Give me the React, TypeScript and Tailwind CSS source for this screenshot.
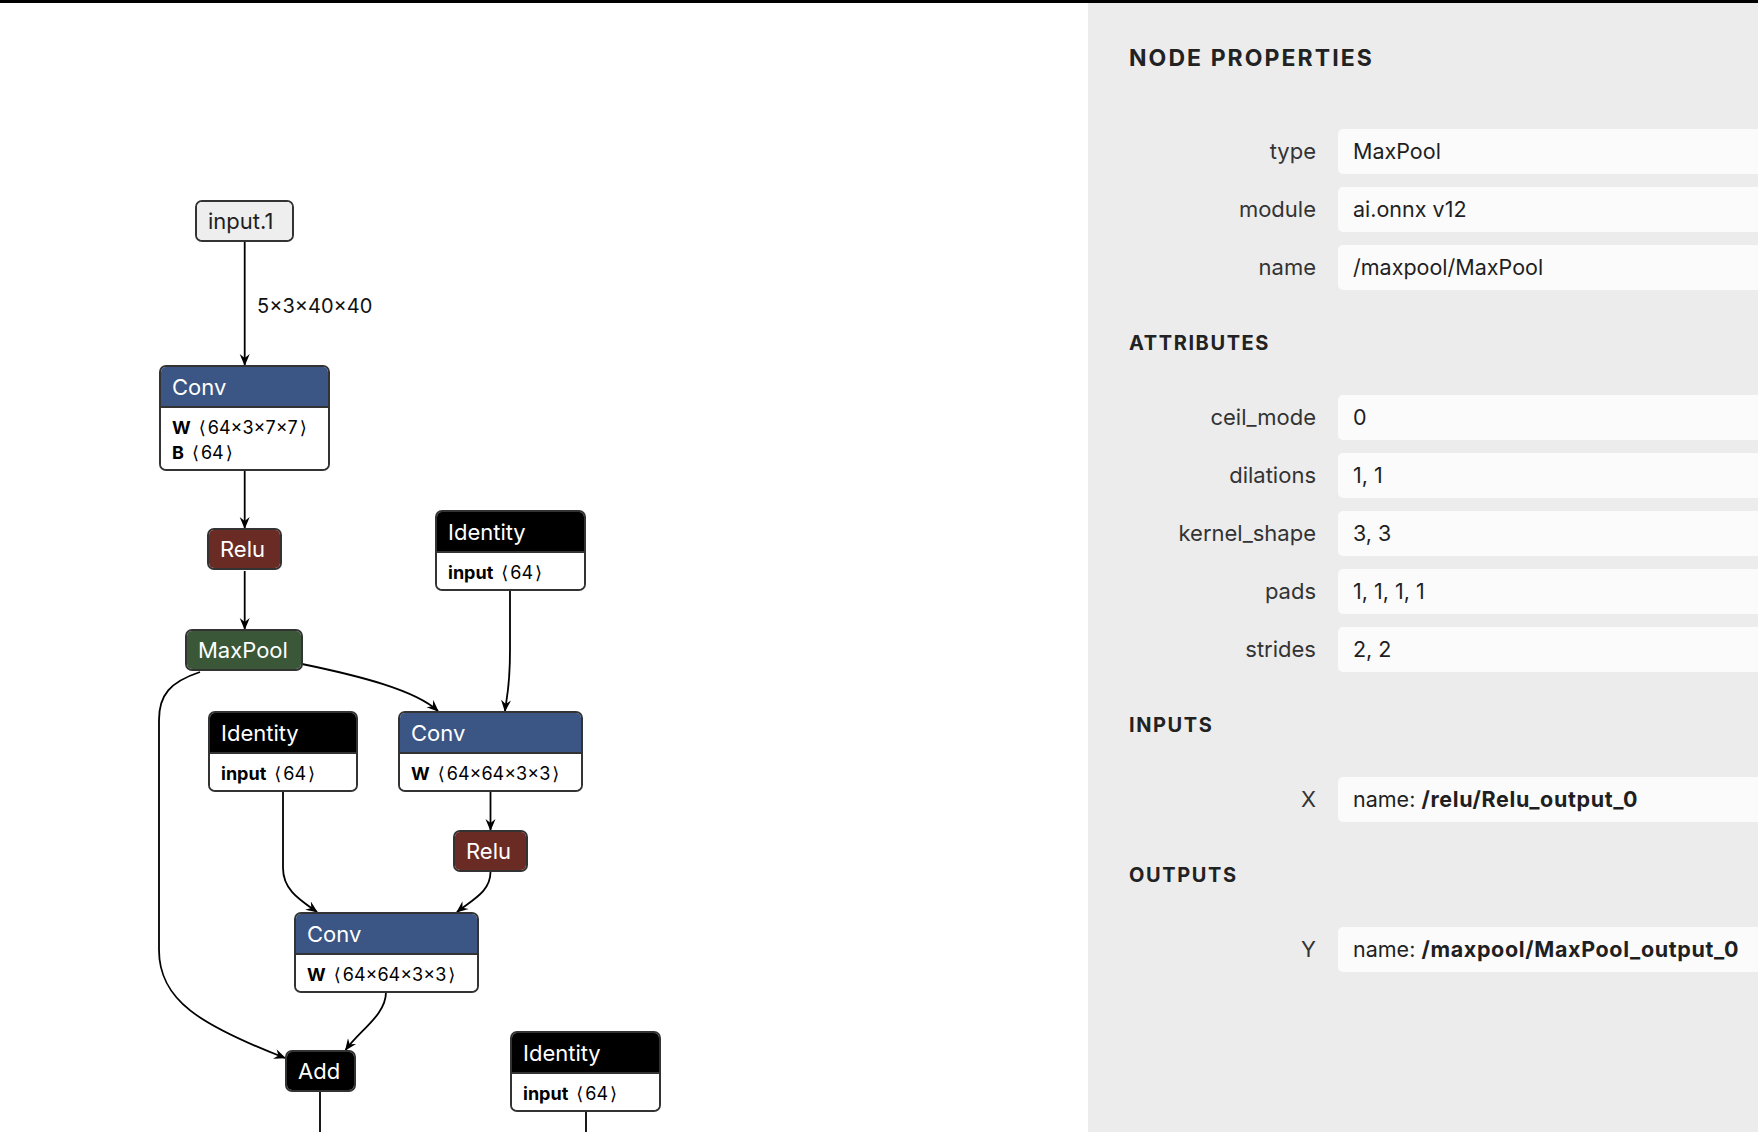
import React from 'react';

type Row = { k: string; v: string };

interface GraphNode {
  id: string;
  title: string;
  x: number;
  y: number;
  w: number;
  header: string;
  text?: string;
  rows?: Row[];
  bodyH?: number;
}

// canvas starts below the 3px top bar
const OY = 3;

const nodes: GraphNode[] = [
  { id: 'in', title: 'input.1', x: 195, y: 200, w: 99, header: 'bg-[#eeeeee]', text: 'text-[#1f1f1f]' },
  {
    id: 'conv1', title: 'Conv', x: 159, y: 365, w: 171, header: 'bg-[#3b5584]', bodyH: 61,
    rows: [{ k: 'W', v: '64×3×7×7' }, { k: 'B', v: '64' }],
  },
  { id: 'relu1', title: 'Relu', x: 207, y: 528, w: 75, header: 'bg-[#6b2b25]' },
  { id: 'maxpool', title: 'MaxPool', x: 185, y: 629, w: 118, header: 'bg-[#3a5738]' },
  { id: 'id1', title: 'Identity', x: 435, y: 510, w: 151, header: 'bg-black', bodyH: 36, rows: [{ k: 'input', v: '64' }] },
  { id: 'id2', title: 'Identity', x: 208, y: 711, w: 150, header: 'bg-black', bodyH: 36, rows: [{ k: 'input', v: '64' }] },
  { id: 'conv2', title: 'Conv', x: 398, y: 711, w: 185, header: 'bg-[#3b5584]', bodyH: 36, rows: [{ k: 'W', v: '64×64×3×3' }] },
  { id: 'relu2', title: 'Relu', x: 453, y: 830, w: 75, header: 'bg-[#6b2b25]' },
  { id: 'conv3', title: 'Conv', x: 294, y: 912, w: 185, header: 'bg-[#3b5584]', bodyH: 36, rows: [{ k: 'W', v: '64×64×3×3' }] },
  { id: 'add', title: 'Add', x: 285, y: 1050, w: 71, header: 'bg-black' },
  { id: 'id3', title: 'Identity', x: 510, y: 1031, w: 151, header: 'bg-black', bodyH: 36, rows: [{ k: 'input', v: '64' }] },
];

const edges = [
  { d: 'M 244.7 242 L 244.7 365', arrow: true },
  { d: 'M 244.7 470 L 244.7 528', arrow: true },
  { d: 'M 244.7 571 L 244.7 629', arrow: true },
  { d: 'M 302 664 C 360 676 415 690 438 711', arrow: true },
  { d: 'M 510 591 L 510 650 C 510 690 506 700 505 711', arrow: true },
  { d: 'M 200 672 C 170 682 159 695 159 720 L 159 950 C 159 1000 200 1025 285 1058', arrow: true },
  { d: 'M 283 792 L 283 868 C 283 890 300 900 317 912', arrow: true },
  { d: 'M 490.5 792 L 490.5 830', arrow: true },
  { d: 'M 490.5 872 C 490.5 892 472 900 457 912', arrow: true },
  { d: 'M 386 992 C 386 1015 360 1030 345.6 1050', arrow: true },
  { d: 'M 320 1092 L 320 1140', arrow: false },
  { d: 'M 586 1112 L 586 1140', arrow: false },
];

const Node: React.FC<{ n: GraphNode }> = ({ n }) => {
  const single = !n.rows;
  return (
    <div
      className="absolute border-2 border-[#333333] rounded-[7px] overflow-hidden"
      style={{ left: n.x, top: n.y - OY, width: n.w }}
    >
      <div
        className={`${n.header} ${n.text ?? 'text-white'} flex items-center px-[11px] text-[22px] leading-none whitespace-nowrap ${
          single ? 'h-[38px]' : 'h-[41px] border-b-2 border-[#333333]'
        }`}
      >
        {n.title}
      </div>
      {n.rows && (
        <div
          className="bg-white flex flex-col justify-center px-[11px] pt-[3px] text-[18px] text-black leading-[25px]"
          style={{ height: n.bodyH }}
        >
          {n.rows.map((r) => (
            <div key={r.k} className="whitespace-nowrap">
              <span className="font-bold">{r.k}</span>
              <span className="ml-[8px]">⟨</span>
              <span className="ml-[2px]">{r.v}</span>
              <span className="ml-[2px]">⟩</span>
            </div>
          ))}
        </div>
      )}
    </div>
  );
};

const Graph: React.FC = () => (
  <div className="relative flex-1 bg-white overflow-hidden">
    <svg className="absolute inset-0 w-full h-full" xmlns="http://www.w3.org/2000/svg">
      <defs>
        <marker
          id="arrow"
          viewBox="0 0 12 12"
          refX="11"
          refY="6"
          markerWidth="12"
          markerHeight="12"
          markerUnits="userSpaceOnUse"
          orient="auto"
        >
          <path d="M 0 1 L 12 6 L 0 11 L 4 6 z" fill="#000" />
        </marker>
      </defs>
      <g transform={`translate(0,${-OY})`}>
        {edges.map((e, i) => (
          <path
            key={i}
            d={e.d}
            fill="none"
            stroke="#000"
            strokeWidth={1.8}
            markerEnd={e.arrow ? 'url(#arrow)' : undefined}
          />
        ))}
      </g>
    </svg>
    <div className="absolute left-[257px] top-[291px] text-[20px] leading-[24px] text-[#111]">5×3×40×40</div>
    {nodes.map((n) => (
      <Node key={n.id} n={n} />
    ))}
  </div>
);

const PropRow: React.FC<{ label: string; children: React.ReactNode }> = ({ label, children }) => (
  <div className="flex items-center h-[45px]">
    <div className="w-[187px] text-right text-[22px] text-[#333333]">{label}</div>
    <div className="ml-[22px] flex-1 h-full bg-[#fbfbfb] rounded-l-[5px] flex items-center pl-[15px] text-[21.5px] text-[#1f1f1f] whitespace-nowrap">
      {children}
    </div>
  </div>
);

const Section: React.FC<{ title: string; children: React.ReactNode }> = ({ title, children }) => (
  <div>
    <div className="mt-[38px] h-[30px] leading-[30px] text-[20px] font-bold tracking-[0.08em] text-[#222222]">
      {title}
    </div>
    <div className="mt-[37px] flex flex-col gap-[13px]">{children}</div>
  </div>
);

const Panel: React.FC = () => (
  <div className="w-[670px] bg-[#ececec] pl-[41px] pt-[40px] overflow-hidden">
    <div className="h-[30px] leading-[30px] text-[23px] font-bold tracking-[0.09em] text-[#222222]">
      NODE PROPERTIES
    </div>
    <div className="mt-[56px] flex flex-col gap-[13px]">
      <PropRow label="type">MaxPool</PropRow>
      <PropRow label="module">ai.onnx v12</PropRow>
      <PropRow label="name">/maxpool/MaxPool</PropRow>
    </div>
    <Section title="ATTRIBUTES">
      <PropRow label="ceil_mode">0</PropRow>
      <PropRow label="dilations">1, 1</PropRow>
      <PropRow label="kernel_shape">3, 3</PropRow>
      <PropRow label="pads">1, 1, 1, 1</PropRow>
      <PropRow label="strides">2, 2</PropRow>
    </Section>
    <Section title="INPUTS">
      <PropRow label="X">
        name:&nbsp;<span className="font-bold tracking-[0.03em]">/relu/Relu_output_0</span>
      </PropRow>
    </Section>
    <Section title="OUTPUTS">
      <PropRow label="Y">
        name:&nbsp;<span className="font-bold tracking-[0.03em]">/maxpool/MaxPool_output_0</span>
      </PropRow>
    </Section>
  </div>
);

export default function App() {
  return (
    <div
      className="w-[1758px] h-[1132px] flex flex-col overflow-hidden bg-white"
      style={{ fontFamily: 'Inter, "Noto Sans", "DejaVu Sans", sans-serif' }}
    >
      <div className="h-[3px] bg-black shrink-0" />
      <div className="flex flex-1 min-h-0">
        <Graph />
        <Panel />
      </div>
    </div>
  );
}
